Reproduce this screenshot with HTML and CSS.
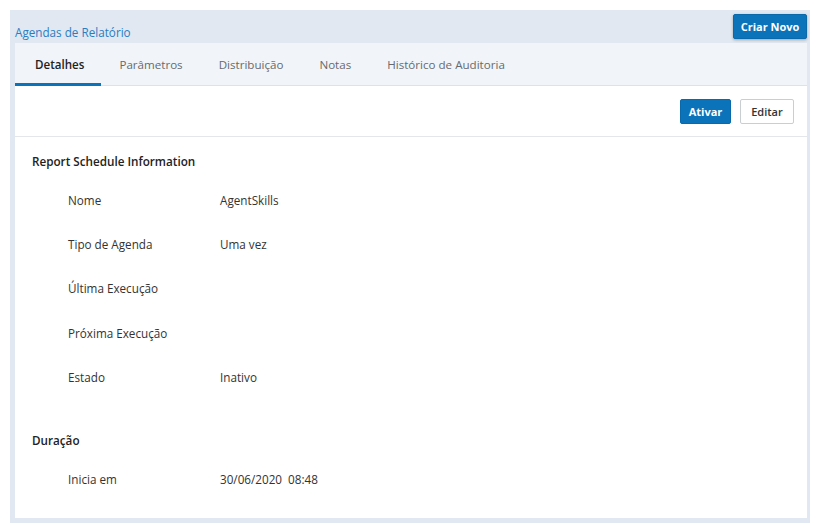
FILE: index.html
```html
<!DOCTYPE html>
<html lang="pt">
<head>
<meta charset="utf-8">
<link rel="stylesheet" href="styles.css">
</head>
<body>
<div class="panel">
  <div class="panel-head">
    <span class="panel-title">Agendas de Relatório</span>
    <button class="btn btn-primary btn-new">Criar Novo</button>
  </div>
  <div class="card">
    <nav class="tabs">
      <span class="tab active">Detalhes</span>
      <span class="tab">Parâmetros</span>
      <span class="tab">Distribuição</span>
      <span class="tab">Notas</span>
      <span class="tab">Histórico de Auditoria</span>
    </nav>
    <div class="actions">
      <button class="btn btn-primary">Ativar</button>
      <button class="btn btn-default">Editar</button>
    </div>
    <div class="content">
      <h3 class="section-title">Report Schedule Information</h3>
      <div class="row"><span class="label">Nome</span><span class="value">AgentSkills</span></div>
      <div class="row"><span class="label">Tipo de Agenda</span><span class="value">Uma vez</span></div>
      <div class="row"><span class="label">Última Execução</span><span class="value"></span></div>
      <div class="row"><span class="label">Próxima Execução</span><span class="value"></span></div>
      <div class="row"><span class="label">Estado</span><span class="value">Inativo</span></div>
      <h3 class="section-title section-gap">Duração</h3>
      <div class="row"><span class="label">Inicia em</span><span class="value">30/06/2020&nbsp;&nbsp;08:48</span></div>
    </div>
  </div>
</div>
</body>
</html>
```
FILE: styles.css
```css
* { box-sizing: border-box; }
html, body { margin: 0; padding: 0; background: #ffffff; }
body {
  font-family: "Open Sans", "Liberation Sans", sans-serif;
  font-size: 11.7px;
  color: #333333;
}
.panel {
  margin: 10px 0 0 10px;
  width: 800px;
  height: 513px;
  background: #e1e8f1;
  padding: 0 3px 5px 5px;
  display: flex;
  flex-direction: column;
}
.panel-head {
  height: 33px;
  display: flex;
  align-items: flex-end;
  justify-content: space-between;
  position: relative;
}
.panel-title {
  color: #2a7dc1;
  font-size: 11.7px;
  line-height: 16px;
  margin-bottom: 3px;
}
.btn {
  font-family: inherit;
  font-size: 11px;
  font-weight: 700;
  height: 25px;
  border-radius: 2px;
  padding: 0;
  cursor: pointer;
}
.btn-primary {
  background: #0a73ba;
  color: #ffffff;
  border: 1px solid #0a69aa;
}
.btn-default {
  background: #ffffff;
  color: #333333;
  border: 1px solid #c9ced3;
  font-weight: 600;
}
.btn-new {
  position: absolute;
  right: 0;
  top: 4px;
  width: 74px;
  box-shadow: 0 1px 3px rgba(0,0,0,0.3);
}
.card {
  flex: 1;
  background: #ffffff;
  display: flex;
  flex-direction: column;
}
.tabs {
  height: 43px;
  background: #f1f5f9;
  border-bottom: 1px solid #dbe2e9;
  display: flex;
  align-items: stretch;
}
.tab {
  display: flex;
  align-items: center;
  padding: 3px 18px 0;
  color: #666a6e;
  font-size: 11.6px;
  border-bottom: 3px solid transparent;
  margin-bottom: -1px;
}
.tab:first-child { padding: 3px 17px 0 20px; }
.tab.active {
  color: #222222;
  font-weight: 600;
  border-bottom-color: #0a73ba;
}
.actions {
  height: 51px;
  border-bottom: 1px solid #e3e7eb;
  display: flex;
  justify-content: flex-end;
  align-items: center;
  gap: 9px;
  padding: 0 13px 0 0;
}
.actions .btn-primary { width: 51px; }
.actions .btn-default { width: 54px; }
.content {
  padding: 15px 0 0 17px;
}
.section-title {
  margin: 0;
  font-size: 11.7px;
  font-weight: 600;
  line-height: 18px;
  color: #222222;
}
.section-gap { margin-top: 32px; }
.row {
  display: flex;
  height: 44.2px;
  align-items: center;
  padding-left: 36px;
}
.section-title + .row { margin-top: 8px; }
.label { width: 152px; }
.value { color: #333333; }
```
